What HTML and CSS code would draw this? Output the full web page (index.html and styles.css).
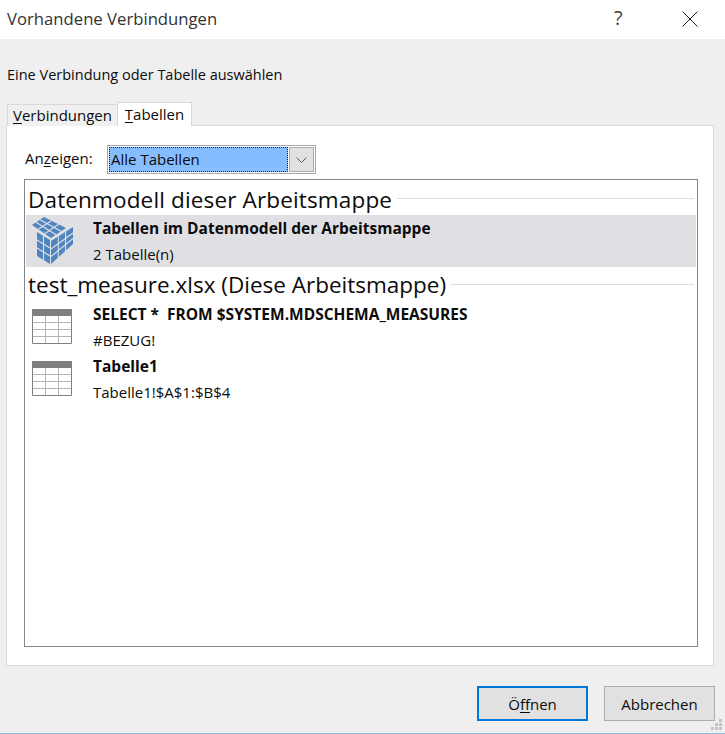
FILE: index.html
```html
<!DOCTYPE html>
<html lang="de">
<head>
<meta charset="utf-8">
<title>Vorhandene Verbindungen</title>
<link rel="stylesheet" href="styles.css">
</head>
<body>
<div class="dialog">
  <header class="titlebar">
    <span class="title">Vorhandene Verbindungen</span>
    <span class="help">?</span>
    <svg class="close" width="16" height="16" viewBox="0 0 16 16"><path d="M.5.5l15 15M15.500.5l-15 15" stroke="#222" stroke-width="1" fill="none"/></svg>
  </header>
  <p class="prompt">Eine Verbindung oder Tabelle auswählen</p>
  <div class="tabs">
    <div class="tab"><u>V</u>erbindungen</div>
    <div class="tab active"><u>T</u>abellen</div>
  </div>
  <section class="panel">
    <div class="filter">
      <label class="filter-label">An<u>z</u>eigen:</label>
      <div class="combo">
        <div class="combo-value">Alle Tabellen</div>
        <div class="combo-btn"><svg width="11" height="6" viewBox="0 0 11 6"><path d="M.5.500l5 5 5-5" stroke="#555" fill="none"/></svg></div>
      </div>
    </div>
    <div class="list">
      <div class="group first"><span class="group-name">Datenmodell dieser Arbeitsmappe</span><span class="rule"></span></div>
      <div class="row selected">
        <svg class="icon cube" width="42" height="47" viewBox="0 0 42 47">
          <g fill="#4f86c0">
            <path d="M0 8 12 0 34 11 19 21Z"/>
            <path d="M5 15 18 23V47L5 39Z"/>
            <path d="M19 24 41 10V27L19 47Z"/>
          </g>
          <g stroke="#e0e0e4" stroke-width="1.100" fill="none">
            <path d="M8 2.700 29 14.300M4 5.300 24 17.700M19.300 3.700 6.300 12.300M26.700 7.300 12.700 16.700"/>
            <path d="M11.500 18V44M5 23 18 31M5 31 18 39"/>
            <path d="M26.300 19.500V41M33.600 14.500V34M19 32 41 16M19 39.500 41 21.500"/>
          </g>
        </svg>
        <div class="row-text"><div class="row-title">Tabellen im Datenmodell der Arbeitsmappe</div><div class="row-sub">2 Tabelle(n)</div></div>
      </div>
      <div class="group"><span class="group-name">test_measure.xlsx (Diese Arbeitsmappe)</span><span class="rule"></span></div>
      <div class="row">
        <svg class="icon table-icon" width="40" height="35" viewBox="0 0 40 35">
          <path d="M0 0H40V7H0Z" fill="#808080"/>
          <path d="M1 13.500H39M1 20.500H39M1 27.500H39M13.500 7V34M26.500 7V34" stroke="#b4b4b4" fill="none"/>
          <path d="M.5 .5H39.500V34.500H.5Z" stroke="#808080" fill="none"/>
        </svg>
        <div class="row-text"><div class="row-title">SELECT *&nbsp; FROM $SYSTEM.MDSCHEMA_MEASURES</div><div class="row-sub">#BEZUG!</div></div>
      </div>
      <div class="row">
        <svg class="icon table-icon" width="40" height="35" viewBox="0 0 40 35">
          <path d="M0 0H40V7H0Z" fill="#808080"/>
          <path d="M1 13.500H39M1 20.500H39M1 27.500H39M13.500 7V34M26.500 7V34" stroke="#b4b4b4" fill="none"/>
          <path d="M.5 .5H39.500V34.500H.5Z" stroke="#808080" fill="none"/>
        </svg>
        <div class="row-text"><div class="row-title">Tabelle1</div><div class="row-sub">Tabelle1!$A$1:$B$4</div></div>
      </div>
    </div>
  </section>
  <footer class="actions">
    <button class="btn default">Ö<u>f</u>fnen</button>
    <button class="btn">Abbrechen</button>
  </footer>
  <svg class="grip" width="12" height="12" viewBox="0 0 12 12"><path d="M8 0h3v3H8zM4 4h3v3H4zM8 4h3v3H8zM0 8h3v3H0zM4 8h3v3H4zM8 8h3v3H8z" fill="#c4c4c4"/></svg>
</div>
</body>
</html>
```
FILE: styles.css
```css
html, body { margin: 0; padding: 0; }
body { font-family: "Open Sans", "Noto Sans", "Liberation Sans", sans-serif; color: #0c0c0c; font-size: 15px; }
u { text-underline-offset: 2px; text-decoration-thickness: 1px; }
.dialog { position: relative; width: 725px; height: 734px; background: #efefef; display: flex; flex-direction: column; overflow: hidden; border-bottom: 1px solid #8fbce8; box-sizing: border-box; }
.titlebar { height: 39px; background: #fff; display: flex; align-items: center; padding: 0 27px 3px 7px; box-sizing: border-box; flex: none; }
.title { font-size: 16.700px; color: #333; flex: 1; }
.help { font-size: 20px; line-height: 20px; color: #444; width: 68px; }
.close { position: relative; top: 1px; }
.prompt { margin: 26px 0 0 7px; line-height: 20px; height: 20px; font-size: 14.500px; }
.tabs { display: flex; margin: 17px 0 -1px 7px; height: 24px; align-items: flex-end; position: relative; z-index: 1; }
.tab { width: 109px; height: 21px; line-height: 21px; text-align: center; border: 1px solid #d9d9d9; border-bottom: 0; background: #f0f0f0; }
.tab.active { width: 73px; height: 23px; line-height: 22px; background: #fff; margin-left: -1px; }
.panel { margin: 0 11px 0 6px; height: 541px; box-sizing: border-box; background: #fff; border: 1px solid #d9d9d9; padding: 19px 15px 18px 17px; display: flex; flex-direction: column; flex: none; }
.filter { display: flex; align-items: center; height: 29px; flex: none; }
.filter-label { width: 82px; margin-left: 1px; position: relative; top: -2px; }
.combo { width: 209px; height: 29px; box-sizing: border-box; border: 1px solid #a6a6a6; padding: 1px; display: flex; background: #fff; }
.combo-value { flex: 1; background: #85bdff; outline: 1px dotted #222; outline-offset: -1px; line-height: 25px; padding-left: 2px; }
.combo-btn { width: 25px; margin-left: 1px; background: #e1e1e1; border: 1px solid #adadad; box-sizing: border-box; display: flex; align-items: center; justify-content: center; }
.list { margin-top: 5px; flex: 1; border: 1px solid #82878f; padding: 0 1px; min-height: 0; }
.group { height: 34px; display: flex; align-items: center; padding-left: 2px; gap: 5px; }
.group.first { height: 35px; }
.group-name { font-size: 22.500px; line-height: 30px; color: #0c0c0c; white-space: nowrap; position: relative; top: 1px; }
.group.first .group-name { letter-spacing: .15px; top: 2px; }
.rule { flex: 1; height: 1px; background: #dcdcdc; margin-right: 2px; }
.group.first .rule { position: relative; top: 1px; }
.row { height: 52px; display: flex; padding-left: 6px; }
.row.selected { background: #e0e0e4; }
.icon { flex: none; margin-top: 2px; }
.cube { margin-right: -2px; }
.table-icon { margin-top: 8px; }
.row-text { margin-left: 21px; }
.row-title { font-weight: 700; line-height: 26px; font-size: 15.500px; white-space: nowrap; }
.row-sub { line-height: 26px; }
.actions { display: flex; justify-content: flex-end; gap: 16px; padding: 20px 10px 0 0; }
.btn { width: 111px; height: 35px; background: #e1e1e1; border: 1px solid #adadad; font: inherit; color: #0c0c0c; padding: 1px 0 0; }
.btn.default { border: 2px solid #0078d7; }
.grip { position: absolute; right: 2px; bottom: 2px; }
```
